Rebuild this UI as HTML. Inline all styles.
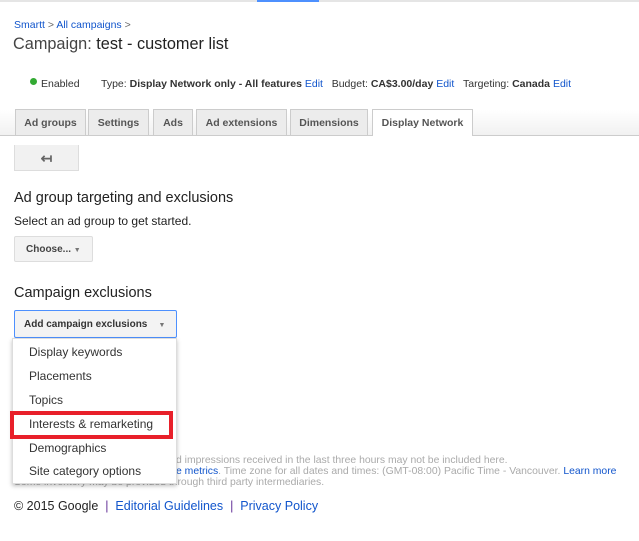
<!DOCTYPE html>
<html><head><meta charset="utf-8"><style>
body{margin:0;width:639px;height:541px;background:#fff;font-family:"Liberation Sans",Arial,sans-serif;position:relative;overflow:hidden;color:#222}
.a{position:absolute;white-space:nowrap}
a,.l{color:#15c;text-decoration:none}
.tab{position:absolute;top:109px;height:26px;background:#ececec;border:1px solid #ccc;border-bottom:none;box-sizing:border-box;font-size:10.5px;font-weight:bold;color:#555;line-height:26px;text-align:center;overflow:hidden}
.it{position:absolute;left:29px;font-size:12px;color:#333}
</style></head><body>
<div class="a" style="left:0;top:0;width:639px;height:2px;background:#e5e5e5"></div>
<div class="a" style="left:257px;top:0;width:62px;height:2px;background:#4d90fe"></div>
<div class="a l" style="left:14px;top:19px;font-size:10.5px">Smartt <span style="color:#666">&gt;</span> All campaigns <span style="color:#666">&gt;</span></div>
<div class="a" style="left:13px;top:35px;font-size:16.3px;color:#444">Campaign: <span style="color:#222">test - customer list</span></div>
<div class="a" style="left:30px;top:78px;width:7px;height:7px;border-radius:50%;background:#3a3"></div>
<div class="a" style="left:41px;top:78px;font-size:10.5px;color:#333">Enabled</div>
<div class="a" style="left:101px;top:78px;font-size:10.5px;color:#333">Type: <b>Display Network only - All features</b> <a>Edit</a> &nbsp;&nbsp;Budget: <b>CA$3.00/day</b> <a>Edit</a> &nbsp;&nbsp;Targeting: <b>Canada</b> <a>Edit</a></div>
<div class="a" style="left:0;top:110px;width:639px;height:25px;background:linear-gradient(#fff,#f1f1f1)"></div>
<div class="a" style="left:0;top:135px;width:639px;height:1px;background:#ccc"></div>
<div class="tab" style="left:15px;width:71px">Ad groups</div>
<div class="tab" style="left:88px;width:61px">Settings</div>
<div class="tab" style="left:153px;width:40px">Ads</div>
<div class="tab" style="left:196px;width:91px">Ad extensions</div>
<div class="tab" style="left:290px;width:78px">Dimensions</div>
<div class="tab" style="left:372px;width:101px;background:#fff;height:27px;color:#555">Display Network</div>
<div class="a" style="left:14px;top:145px;width:65px;height:26px;box-sizing:border-box;border:1px solid #ddd;border-top:none;background:#f1f1f1;text-align:center;line-height:26px;font-size:14px;color:#666;font-weight:bold">&#8612;</div>
<div class="a" style="left:14px;top:190px;font-size:14.5px;color:#222">Ad group targeting and exclusions</div>
<div class="a" style="left:14px;top:214px;font-size:12px;color:#222">Select an ad group to get started.</div>
<div class="a" style="left:14px;top:236px;width:79px;height:26px;box-sizing:border-box;border:1px solid #ddd;border-radius:2px;background:#f3f3f3;font-size:10px;font-weight:bold;color:#444;line-height:26px;padding-left:11px">Choose... <span style="font-size:7px;color:#777">▼</span></div>
<div class="a" style="left:14px;top:285px;font-size:14.5px;color:#222">Campaign exclusions</div>
<div class="a" style="left:14px;top:310px;width:163px;height:28px;box-sizing:border-box;border:1px solid #4d90fe;border-radius:2px;background:#f3f3f3;font-size:10px;font-weight:bold;color:#333;line-height:28px;padding-left:9px">Add campaign exclusions &nbsp;&nbsp;&nbsp;<span style="font-size:7px;color:#777">▼</span></div>
<div class="a" style="left:176px;top:455px;font-size:10.4px;color:#aaa">d impressions received in the last three hours may not be included here.</div>
<div class="a" style="left:176px;top:466px;font-size:10.4px;color:#aaa"><span class="l">e metrics</span>. Time zone for all dates and times: (GMT-08:00) Pacific Time - Vancouver. <span class="l">Learn more</span></div>
<div class="a" style="left:14px;top:477px;font-size:10.4px;color:#aaa">Some inventory may be provided through third party intermediaries.</div>
<div class="a" style="left:12px;top:338px;width:165px;height:146px;background:#fff;box-shadow:0 2px 4px rgba(0,0,0,.25);border:1px solid #ddd;box-sizing:border-box"></div>
<div class="it" style="top:345px">Display keywords</div>
<div class="it" style="top:369px">Placements</div>
<div class="it" style="top:393px">Topics</div>
<div class="it" style="top:417px">Interests &amp; remarketing</div>
<div class="it" style="top:441px">Demographics</div>
<div class="it" style="top:464px">Site category options</div>
<div class="a" style="left:10px;top:411px;width:163px;height:28px;box-sizing:border-box;border:4px solid #e8202a"></div>
<div class="a" style="left:14px;top:499px;font-size:12.5px;color:#222">© 2015 Google &nbsp;<span style="color:#639">|</span>&nbsp; <a>Editorial Guidelines</a> &nbsp;<span style="color:#639">|</span>&nbsp; <a>Privacy Policy</a></div>
</body></html>
